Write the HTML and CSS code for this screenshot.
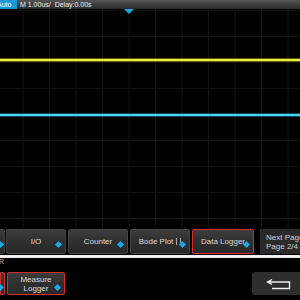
FILE: index.html
```html
<!DOCTYPE html>
<html>
<head>
<meta charset="utf-8">
<link rel="stylesheet" href="styles.css">
</head>
<body>
<div class="scope">
  <div class="topbar">
    <div class="mode"><span>Auto</span></div>
    <div class="timebase">M 1.00us/&nbsp; Delay:0.00s</div>
  </div>
  <div class="screen">
    <div class="trig"></div>
    <div class="trace ch1"></div>
    <div class="trace ch2"></div>
  </div>
  <div class="menu">
    <div class="btn part"><span class="arr"></span></div>
    <div class="btn w60"><span class="lbl">I/O</span><span class="arr"></span></div>
    <div class="btn w60"><span class="lbl">Counter</span><span class="arr"></span></div>
    <div class="btn w60"><span class="lbl">Bode Plot</span><span class="bode"></span><span class="arr"></span></div>
    <div class="btn w62 sel"><span class="lbl">Data Logger</span><span class="arr"></span></div>
    <div class="next"><span>Next Page</span><span>Page 2/4</span></div>
  </div>
</div>
<div class="sep"></div>
<div class="lower">
  <div class="rlabel">R</div>
  <div class="lrow">
    <div class="btn part sel"><span class="arr"></span></div>
    <div class="btn w58 sel two"><span class="lbl">Measure<br>Logger</span><span class="arr"></span></div>
    <div class="spacer"></div>
    <div class="ret">
      <svg width="26" height="12" viewBox="0 0 26 12">
        <path d="M6 1.5 L1.5 4 L6 6.5 M2 4 H23.5 V10.5 H6" fill="none" stroke="#eee" stroke-width="1.4"/>
      </svg>
    </div>
  </div>
</div>
</body>
</html>
```

FILE: styles.css
```css
html, body {
  margin: 0;
  padding: 0;
  background: #000;
}
body {
  width: 300px;
  height: 300px;
  overflow: hidden;
  font-family: "Liberation Sans", Arial, sans-serif;
  color: #dcdcdc;
}
.scope {
  display: flex;
  flex-direction: column;
  height: 255px;
}
.topbar {
  height: 9px;
  display: flex;
  align-items: center;
  background: linear-gradient(#555, #3a3a3a 60%, #2c2c2c);
  font-size: 7px;
  line-height: 9px;
}
.mode {
  width: 17px;
  height: 9px;
  background: #1c96d4;
  overflow: hidden;
  color: #fff;
  white-space: nowrap;
}
.mode span {
  display: inline-block;
  margin-left: -3px;
}
.timebase {
  padding-left: 3px;
  color: #f0f0f0;
}
.screen {
  position: relative;
  height: 219px;
  background-color: #000;
  background-image:
    repeating-linear-gradient(90deg, transparent 0, transparent 23px, #131313 23px, #131313 24px, transparent 24px, transparent 26.5px),
    repeating-linear-gradient(180deg, transparent 0, transparent 25px, #111 25px, #111 26px);
  background-size: 26.5px 100%, 100% 26px;
  background-position: 0 0, 0 2px;
}
.trig {
  position: absolute;
  left: 124px;
  top: 0;
  width: 0;
  height: 0;
  border-left: 5px solid transparent;
  border-right: 5px solid transparent;
  border-top: 5px solid #1aa6df;
}
.trace {
  position: absolute;
  left: 0;
  right: 0;
  height: 2px;
}
.ch1 {
  top: 50px;
  background: #f0ef3c;
  box-shadow: 0 0 1px 1px rgba(160, 160, 30, 0.6);
}
.ch2 {
  top: 105px;
  background: #48d4ee;
  box-shadow: 0 0 1px 1px rgba(30, 130, 150, 0.6);
}
.menu {
  height: 27px;
  display: flex;
  align-items: flex-start;
  padding-top: 1px;
  box-sizing: border-box;
}
.btn {
  position: relative;
  height: 25px;
  box-sizing: border-box;
  background: linear-gradient(#3c3c3c, #2f2f2f 50%, #282828);
  border: 1px solid #444;
  border-radius: 2px;
  display: flex;
  align-items: center;
  justify-content: center;
  font-size: 8px;
  color: #dcdcdc;
  margin-right: 2px;
  flex: none;
}
.part {
  width: 5px;
  margin-right: 1px;
  border-left: none;
  border-radius: 0 2px 2px 0;
}
.w60 { width: 60px; }
.w62 { width: 62px; margin-right: 6px; }
.w58 { width: 58px; }
.sel {
  border: 1.5px solid #d42a2a;
}
.lbl {
  white-space: nowrap;
}
.two .lbl {
  text-align: center;
  line-height: 9px;
}
.arr {
  position: absolute;
  right: 4px;
  top: 12px;
  width: 5px;
  height: 5px;
  background: #1ca8e2;
  transform: rotate(45deg);
}
.part .arr {
  right: 1px;
}
.bode {
  width: 3px;
  height: 7px;
  margin-left: 3px;
  border-left: 1px solid #aaa;
  border-right: 1px solid #aaa;
}
.next {
  flex: none;
  width: 42px;
  height: 25px;
  background: #2a2a2a;
  display: flex;
  flex-direction: column;
  justify-content: center;
  padding-left: 6px;
  box-sizing: border-box;
  font-size: 8px;
  line-height: 9px;
  color: #d0d0d0;
  white-space: nowrap;
  overflow: hidden;
}
.sep {
  height: 3px;
  background: #efefef;
}
.lower {
  height: 42px;
  display: flex;
  flex-direction: column;
}
.rlabel {
  font-size: 7px;
  line-height: 8px;
  height: 14px;
  color: #bbb;
  margin-left: -1px;
}
.lrow {
  display: flex;
  height: 23px;
}
.lrow .btn {
  height: 23px;
}
.lrow .part {
  margin-right: 2px;
}
.spacer {
  flex: 1;
}
.ret {
  width: 48px;
  height: 23px;
  background: #2e2e2e;
  border-radius: 3px 0 0 3px;
  display: flex;
  align-items: center;
  justify-content: center;
  padding-left: 6px;
  box-sizing: border-box;
}
```
